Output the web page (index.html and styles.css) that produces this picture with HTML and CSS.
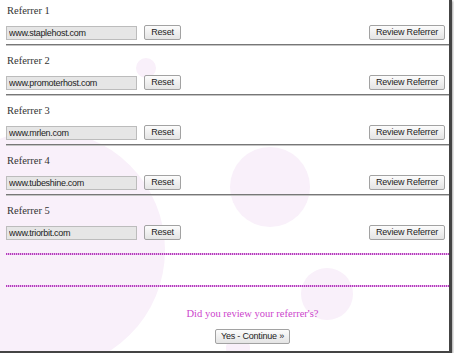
FILE: index.html
```html
<!DOCTYPE html>
<html lang="en">
<head>
    <meta charset="UTF-8">
    <meta name="viewport" content="width=device-width, initial-scale=1.0">
    <title>Review Referrers</title>
    <link rel="stylesheet" href="styles.css">
</head>
<body>

    <div class="window">
        <!-- soft background bubbles -->
        <div class="bubble bubble-big"></div>
        <div class="bubble bubble-tiny"></div>
        <div class="bubble bubble-mid"></div>
        <div class="bubble bubble-low"></div>
        <div class="bubble bubble-btn"></div>

        <div class="referrers">
            <div class="referrer">
                <div class="referrer-label">Referrer 1</div>
                <div class="referrer-controls">
                    <input type="text" class="site" value="www.staplehost.com" readonly>
                    <button type="button" class="btn btn-reset">Reset</button>
                    <button type="button" class="btn btn-review">Review Referrer</button>
                </div>
            </div>
            <div class="referrer">
                <div class="referrer-label">Referrer 2</div>
                <div class="referrer-controls">
                    <input type="text" class="site" value="www.promoterhost.com" readonly>
                    <button type="button" class="btn btn-reset">Reset</button>
                    <button type="button" class="btn btn-review">Review Referrer</button>
                </div>
            </div>
            <div class="referrer">
                <div class="referrer-label">Referrer 3</div>
                <div class="referrer-controls">
                    <input type="text" class="site" value="www.mrlen.com" readonly>
                    <button type="button" class="btn btn-reset">Reset</button>
                    <button type="button" class="btn btn-review">Review Referrer</button>
                </div>
            </div>
            <div class="referrer">
                <div class="referrer-label">Referrer 4</div>
                <div class="referrer-controls">
                    <input type="text" class="site" value="www.tubeshine.com" readonly>
                    <button type="button" class="btn btn-reset">Reset</button>
                    <button type="button" class="btn btn-review">Review Referrer</button>
                </div>
            </div>
            <div class="referrer">
                <div class="referrer-label">Referrer 5</div>
                <div class="referrer-controls">
                    <input type="text" class="site" value="www.triorbit.com" readonly>
                    <button type="button" class="btn btn-reset">Reset</button>
                    <button type="button" class="btn btn-review">Review Referrer</button>
                </div>
            </div>
        </div>

        <div class="dotted"></div>
        <div class="gap"></div>
        <div class="dotted"></div>

        <div class="confirm">
            <p class="confirm-question">Did you review your referrer's?</p>
            <button type="button" class="btn btn-continue">Yes - Continue &raquo;</button>
        </div>
    </div>

</body>
</html>
```

FILE: styles.css
```css
body {
    margin: 0;
    padding: 0;
    background: #fff;
}
.window {
    position: relative;
    width: 449px;
    height: 351px;
    overflow: hidden;
    background: #fff;
    border-right: 3px solid #444;
    border-bottom: 2px solid #444;
    box-shadow: 1px 1px 2px rgba(0, 0, 0, 0.35);
    font-family: "Liberation Serif", serif;
    color: #333;
}
.bubble {
    position: absolute;
    border-radius: 50%;
    background: #f9f0fa;
    z-index: 0;
}
.bubble-big {
    left: -75px;
    top: 130px;
    width: 240px;
    height: 240px;
}
.bubble-tiny {
    left: 136px;
    top: 58px;
    width: 20px;
    height: 20px;
}
.bubble-mid {
    left: 230px;
    top: 147px;
    width: 80px;
    height: 80px;
}
.bubble-low {
    left: 301px;
    top: 268px;
    width: 52px;
    height: 52px;
}
.bubble-btn {
    left: 226px;
    top: 336px;
    width: 24px;
    height: 24px;
}
.referrers,
.dotted,
.gap,
.confirm {
    position: relative;
    z-index: 1;
}
.referrer {
    margin-left: 6px;
    padding: 9px 0 4px;
    border-bottom: 1px solid #777;
    box-shadow: 0 1px 0 #c4c4c4;
}
.referrer:first-child {
    padding-top: 4px;
}
.referrer:last-child {
    border-bottom: none;
    box-shadow: none;
}
.referrer-label {
    font-size: 10.5px;
    line-height: 14px;
    padding-left: 1px;
    margin-bottom: 7px;
}
.referrer-controls {
    display: flex;
    align-items: center;
    height: 15px;
    padding-right: 4px;
}
.site {
    box-sizing: border-box;
    width: 131px;
    height: 14px;
    margin: 0 7px 0 0;
    padding: 0 2px;
    border: 1px solid #bcbcbc;
    background: #e6e6e6;
    font-family: "Liberation Sans", Arial, sans-serif;
    font-size: 9px;
    letter-spacing: -0.3px;
    color: #222;
    outline: none;
}
.btn {
    box-sizing: border-box;
    height: 15px;
    padding: 0;
    border: 1px solid #a2a2a2;
    border-radius: 2px;
    background: linear-gradient(to bottom, #fcfcfc, #e4e4e4);
    font-family: "Liberation Sans", Arial, sans-serif;
    font-size: 9px;
    letter-spacing: -0.2px;
    line-height: 13px;
    color: #222;
    cursor: pointer;
}
.btn-reset {
    width: 37px;
}
.btn-review {
    width: 76px;
    margin-left: auto;
}
.dotted {
    margin: 9px 0 0 6px;
    height: 2px;
    background: repeating-linear-gradient(90deg, #b43cbc 0 1px, #e6b4ea 1px 2px);
}
.gap {
    height: 30px;
}
.dotted + .gap + .dotted {
    margin-top: 0;
}
.confirm {
    padding: 20px 0 0 56px;
    text-align: center;
}
.confirm-question {
    margin: 0;
    font-size: 10.5px;
    line-height: 14px;
    color: #cc44cc;
}
.btn-continue {
    width: 75px;
    margin-top: 8px;
}
```
